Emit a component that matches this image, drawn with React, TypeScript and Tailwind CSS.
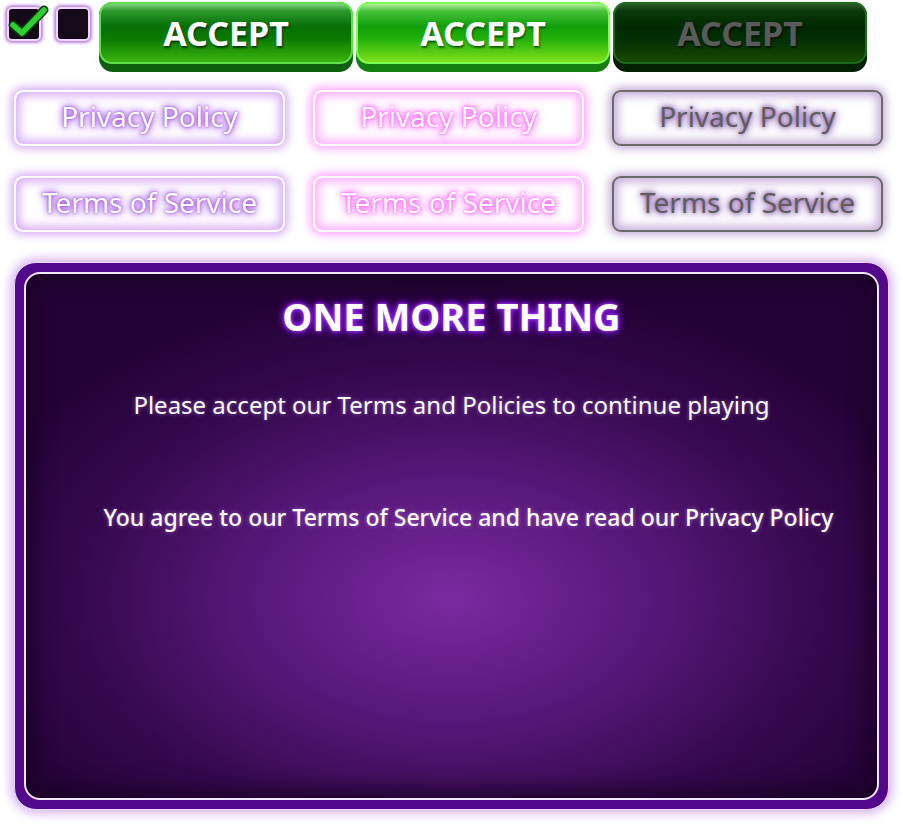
import React from "react";

const font = { fontFamily: '"Noto Sans", "Open Sans", sans-serif' };

function AcceptButton({ variant }: { variant: "normal" | "hover" | "disabled" }) {
  const styles = {
    normal: {
      base: "bg-[#0d5e0d]",
      body: "border-[#5ee04a] bg-[linear-gradient(180deg,#7fd27f_0%,#2e9a2e_12%,#067006_38%,#0a7a00_60%,#3bb410_100%)]",
      text: "text-white [text-shadow:1px_2px_2px_rgba(0,40,0,0.8)]",
    },
    hover: {
      base: "bg-[#14800f]",
      body: "border-[#7cff50] bg-[linear-gradient(180deg,#b0f0a0_0%,#4ac23a_12%,#0fa00a_38%,#22b00a_60%,#7ee01a_100%)]",
      text: "text-white [text-shadow:1px_2px_2px_rgba(0,60,0,0.7)]",
    },
    disabled: {
      base: "bg-[#022002]",
      body: "border-[#1d6a1d] bg-[linear-gradient(180deg,#2c5c2c_0%,#0a3a0a_12%,#002800_40%,#053005_65%,#1a4a02_100%)]",
      text: "text-[#5a5a5a] [text-shadow:1px_2px_2px_rgba(0,0,0,0.6)]",
    },
  }[variant];
  return (
    <div className={`w-[254px] h-[70px] rounded-[14px] ${styles.base}`}>
      <div
        className={`h-[62px] rounded-[13px] border-2 flex items-center justify-center ${styles.body}`}
      >
        <span className={`text-[34px] font-bold leading-none ${styles.text}`} style={font}>
          ACCEPT
        </span>
      </div>
    </div>
  );
}

function NeonButton({ label, variant }: { label: string; variant: "purple" | "pink" | "gray" }) {
  const s = {
    purple: {
      box: "border-white shadow-[0_0_9px_3px_rgba(190,120,240,0.6),inset_0_0_10px_4px_rgba(190,120,240,0.6)]",
      text: "text-white [text-shadow:0_0_2px_#9a40d8,0_0_5px_#a050e0,0_0_9px_#b070f0,0_0_12px_#c090f8]",
    },
    pink: {
      box: "border-white shadow-[0_0_9px_3px_rgba(255,120,255,0.65),inset_0_0_10px_4px_rgba(255,120,255,0.6)]",
      text: "text-white [text-shadow:0_0_2px_#ff40ff,0_0_5px_#ff60ff,0_0_9px_#ff80ff,0_0_12px_#ff90ff]",
    },
    gray: {
      box: "border-[#6a6a6a] shadow-[0_0_9px_3px_rgba(150,110,180,0.55),inset_0_0_10px_4px_rgba(150,110,180,0.55)]",
      text: "text-[#5e5e5e] [text-shadow:0_0_4px_#7a4a9a,0_0_9px_#a080c0,0_0_12px_#b090d0]",
    },
  }[variant];
  return (
    <div className={`w-[271px] h-[56px] rounded-[9px] border-2 bg-white flex items-center justify-center ${s.box}`}>
      <span className={`text-[28px] leading-none -mt-[4px] ${s.text}`} style={font}>
        {label}
      </span>
    </div>
  );
}

function Checkbox({ checked }: { checked?: boolean }) {
  return (
    <div className="relative w-[34px] h-[34px] rounded-[5px] border-2 border-[#f0d8ff] bg-[#140a18] shadow-[0_0_3px_2px_rgba(160,80,220,0.7)]">
      {checked && (
        <svg className="absolute -left-[3px] -top-[6px]" width="46" height="38" viewBox="0 0 46 38">
          <path
            d="M7 22 L16 30 L38 7"
            fill="none"
            stroke="#0a3a0a"
            strokeWidth="9"
            strokeLinecap="round"
            strokeLinejoin="round"
          />
          <path
            d="M7 22 L16 30 L38 7"
            fill="none"
            stroke="#2ed02e"
            strokeWidth="5.5"
            strokeLinecap="round"
            strokeLinejoin="round"
          />
        </svg>
      )}
    </div>
  );
}

export default function App() {
  return (
    <div className="w-[903px] h-[824px] bg-white overflow-hidden" style={font}>
      <div className="flex items-start pt-[2px]">
        <div className="flex gap-[15px] pl-[7px] pt-[5px] w-[99px]">
          <Checkbox checked />
          <Checkbox />
        </div>
        <div className="flex gap-[3px]">
          <AcceptButton variant="normal" />
          <AcceptButton variant="hover" />
          <AcceptButton variant="disabled" />
        </div>
      </div>

      <div className="pl-[14px] mt-[18px] flex flex-col gap-[30px]">
        <div className="flex gap-[28px]">
          <NeonButton label="Privacy Policy" variant="purple" />
          <NeonButton label="Privacy Policy" variant="pink" />
          <NeonButton label="Privacy Policy" variant="gray" />
        </div>
        <div className="flex gap-[28px]">
          <NeonButton label="Terms of Service" variant="purple" />
          <NeonButton label="Terms of Service" variant="pink" />
          <NeonButton label="Terms of Service" variant="gray" />
        </div>
      </div>

      <div className="ml-[14px] mt-[30px] w-[875px] h-[548px] rounded-[22px] border border-[#ecd8ff] bg-[#52088a] p-[9px] shadow-[0_0_10px_4px_rgba(170,100,230,0.45)]">
        <div className="h-full rounded-[16px] border-2 border-[#f4e6ff] bg-[radial-gradient(ellipse_60%_60%_at_50%_62%,#7a2aa0_0%,#561878_40%,#33084c_75%,#240236_100%)] shadow-[inset_0_0_18px_10px_rgba(25,0,35,0.7)] flex flex-col items-center">
          <div
            className="mt-[20px] text-[38px] font-bold text-white leading-[44px] [text-shadow:0_0_3px_#b040ff,0_0_6px_#9020ff,0_0_10px_#8010f0]"
          >
            ONE MORE THING
          </div>
          <div className="mt-[52px] text-[24px] text-white leading-[30px] [text-shadow:0_0_4px_rgba(200,140,255,0.6)]">
            Please accept our Terms and Policies to continue playing
          </div>
          <div className="mt-[82px] ml-[34px] text-[23px] font-medium text-white leading-[30px] [text-shadow:0_0_4px_rgba(200,140,255,0.6)]">
            You agree to our Terms of Service and have read our Privacy Policy
          </div>
        </div>
      </div>
    </div>
  );
}
